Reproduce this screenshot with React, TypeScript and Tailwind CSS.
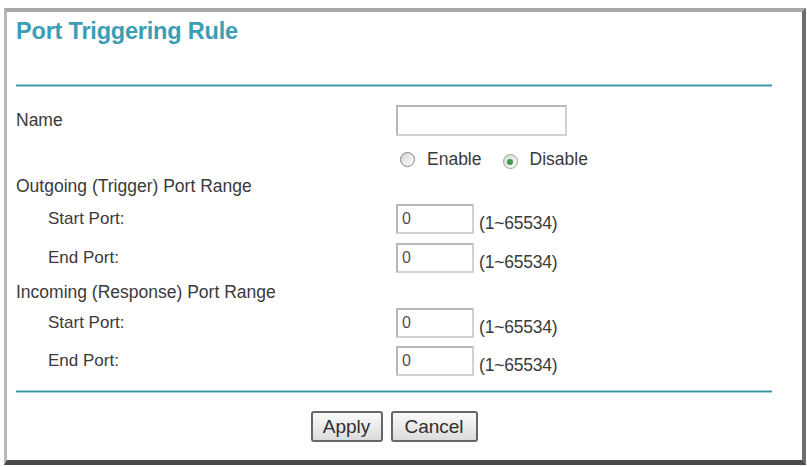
import React from "react";

const font = { fontFamily: '"Liberation Sans", Arial, sans-serif' };

function Radio({ checked }: { checked?: boolean }) {
  return (
    <span
      className={
        "relative box-border inline-flex h-[15px] w-[15px] shrink-0 items-center justify-center rounded-full border-[1.5px] bg-gradient-to-br from-[#d4d4d4] to-[#ffffff] " +
        (checked ? "border-[#86b08a]" : "border-[#7d838a]")
      }
    >
      {checked && <span className="h-[6px] w-[6px] rounded-full bg-[#3f9a4a]" />}
    </span>
  );
}

function PortRow({ label, mt }: { label: string; mt: string }) {
  return (
    <div className={"flex h-[32px] items-center " + mt}>
      <div className="w-[380px] pl-[32px] text-[17px]">{label}</div>
      <div className="flex h-[30px] w-[78px] items-center border-2 border-[#d2d2d2] border-t-[#b8b8b8] border-l-[#b8b8b8] bg-white pl-[4px] text-[16px] text-[#505050]">
        0
      </div>
      <div className="ml-[5px] mt-[9px] text-[17.5px] tracking-[-0.2px]">(1~65534)</div>
    </div>
  );
}

export default function App() {
  return (
    <div className="h-[467px] w-[807px] bg-white pl-[4px] pt-[8px]" style={font}>
      <div className="flex h-[457px] w-[802px] flex-col border-t-[4px] border-l-[3px] border-r-[4px] border-b-[5px] border-t-[#a9a9a9] border-l-[#b9b9b9] border-r-[#6e6e6e] border-b-[#4a4a4a] bg-white pl-[9px] pr-[30px] text-[#3a3a3a]">
        <div className="h-[72px] pt-[6px] text-[23.5px] font-bold leading-[26px] tracking-[-0.2px] text-[#3b9db6]">
          Port Triggering Rule
        </div>
        <div className="h-[3px] w-full border-y border-[#9fd3dc] bg-[#3e8e9c]" />

        <div className="mt-[17px] flex h-[32px] items-center">
          <div className="w-[380px] text-[17.5px]">Name</div>
          <div className="h-[31px] w-[171px] border-2 border-[#d2d2d2] border-t-[#b8b8b8] border-l-[#b8b8b8] bg-white" />
        </div>

        <div className="mt-[7px] flex h-[32px] items-center">
          <div className="w-[384px]" />
          <div className="flex items-center text-[17.5px]">
            <Radio />
            <span className="ml-[12px]">Enable</span>
            <span className="ml-[21px]">
              <Radio checked />
            </span>
            <span className="ml-[12px]">Disable</span>
          </div>
        </div>

        <div className="flex h-[22px] items-center text-[17.5px]">
          Outgoing (Trigger) Port Range
        </div>
        <PortRow label="Start Port:" mt="mt-[6px]" />
        <PortRow label="End Port:" mt="mt-[7px]" />

        <div className="mt-[7px] flex h-[22px] items-center text-[17.5px]">
          Incoming (Response) Port Range
        </div>
        <PortRow label="Start Port:" mt="mt-[4px]" />
        <PortRow label="End Port:" mt="mt-[6px]" />

        <div className="mt-[13px] h-[3px] w-full border-y border-[#9fd3dc] bg-[#3e8e9c]" />

        <div className="mt-[18px] flex justify-center gap-[8px]">
          <button className="h-[31px] w-[72px] rounded-[3px] border-2 border-[#666666] bg-gradient-to-b from-[#fafafa] to-[#dcdcdc] text-[19px] text-[#2e2e2e]">
            Apply
          </button>
          <button className="h-[31px] w-[87px] rounded-[3px] border-2 border-[#666666] bg-gradient-to-b from-[#fafafa] to-[#dcdcdc] text-[19px] text-[#2e2e2e]">
            Cancel
          </button>
        </div>
      </div>
    </div>
  );
}
